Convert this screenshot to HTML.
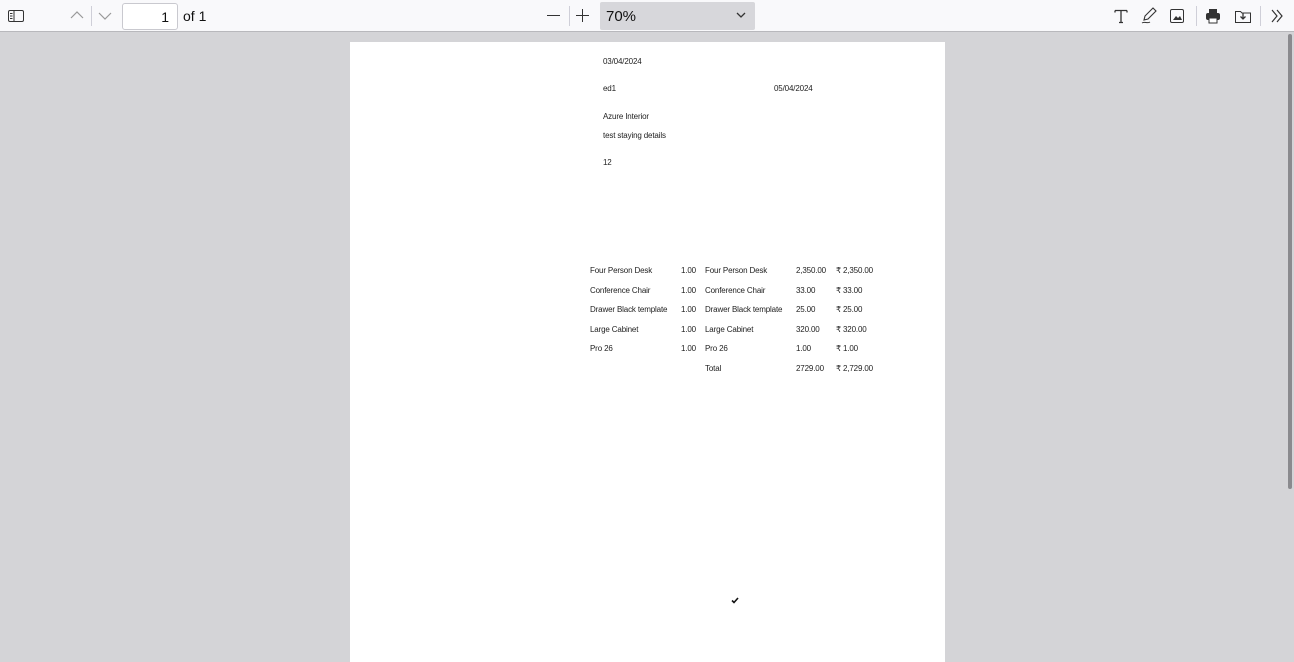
<!DOCTYPE html>
<html><head><meta charset="utf-8"><style>
*{margin:0;padding:0;box-sizing:border-box}
body{width:1294px;height:656px;overflow:hidden;background:#d4d4d7;font-family:"Liberation Sans",sans-serif;position:relative}
.tb{position:absolute;left:0;top:0;width:1294px;height:32px;background:#f9f9fb;border-bottom:1px solid #b8b8bc}
.a{position:absolute}
.sep{position:absolute;top:6px;width:1px;height:20px;background:#cfcfd8}
.page{position:absolute;left:350px;top:42px;width:595px;height:620px;background:#fff}
.t{position:absolute;font-size:8px;color:#222;white-space:nowrap;letter-spacing:-0.15px;margin-top:1px}
svg{position:absolute}
</style></head><body>
<div class="tb">
<svg style="left:8px;top:9px" width="16" height="14" viewBox="0 0 16 14"><rect x="0.5" y="1.5" width="15" height="11" rx="1.5" fill="none" stroke="#333"/><line x1="6" y1="2" x2="6" y2="12" stroke="#333"/><path d="M2 4.5h2.5M2 7h2.5M2 9.5h2.5" stroke="#333"/></svg>
<svg style="left:70px;top:10px" width="14" height="10"><path d="M1 8l6-6 6 6" fill="none" stroke="#999" stroke-width="1.2"/></svg>
<div class="sep" style="left:91px;top:6px"></div>
<svg style="left:98px;top:11px" width="14" height="10"><path d="M1 2l6 6 6-6" fill="none" stroke="#999" stroke-width="1.2"/></svg>
<div class="a" style="left:122px;top:3px;width:56px;height:27px;border:1px solid #c9c9cf;border-radius:3px;background:#fff;font-size:14px;text-align:right;padding:5px 8px 0 0;color:#111">1</div>
<div class="a" style="left:183px;top:8px;font-size:14px;color:#111">of 1</div>
<div class="a" style="left:547px;top:15px;width:13px;height:1.3px;background:#333"></div>
<div class="sep" style="left:569px"></div>
<div class="a" style="left:576px;top:15px;width:13px;height:1.3px;background:#333"></div>
<div class="a" style="left:582px;top:9px;width:1.3px;height:13px;background:#333"></div>
<div class="a" style="left:600px;top:2px;width:155px;height:28px;background:#d7d7db;border-radius:2px;font-size:15px;color:#111;padding:6px 0 0 6px">70%</div>
<svg style="left:736px;top:12px" width="10" height="7"><path d="M1 1l4 4 4-4" fill="none" stroke="#333" stroke-width="1.3"/></svg>
<svg style="left:1113px;top:8px" width="16" height="16"><path d="M2 2.5h12M8 2.5v12M2 2.5v2M14 2.5v2M6 14.5h4" fill="none" stroke="#333" stroke-width="1.3"/></svg>
<svg style="left:1141px;top:7px" width="16" height="18"><path d="M3 13l1-4 8-8 3 3-8 8z" fill="none" stroke="#333" stroke-width="1.1"/><path d="M1 16c3-2 5 1 8-1" fill="none" stroke="#333"/></svg>
<svg style="left:1169px;top:8px" width="16" height="16"><rect x="1.5" y="1.5" width="13" height="13" rx="1.5" fill="none" stroke="#333"/><path d="M4 12l3-4 2 2 2-2 2 4z" fill="#333"/></svg>
<div class="sep" style="left:1196px"></div>
<svg style="left:1205px;top:8px" width="16" height="16"><rect x="4" y="1" width="8" height="4" fill="#333"/><rect x="1" y="5" width="14" height="7" rx="2" fill="#333"/><rect x="4" y="10" width="8" height="5" fill="#fff" stroke="#333"/></svg>
<svg style="left:1234px;top:8px" width="18" height="16"><path d="M1.5 3.5h5l1.5 1.5h8.5v9.5h-15z" fill="none" stroke="#333"/><path d="M9 5v6M6.5 8.5L9 11l2.5-2.5" fill="none" stroke="#333" stroke-width="1.3"/></svg>
<div class="sep" style="left:1260px"></div>
<svg style="left:1270px;top:9px" width="14" height="14"><path d="M2 1l5 6-5 6M7 1l5 6-5 6" fill="none" stroke="#333" stroke-width="1.2"/></svg>
</div>
<div class="a" style="left:1288px;top:34px;width:4px;height:455px;background:#8a8a8e;border-radius:2px"></div>
<div class="page">
<div class="t" style="left:253px;top:14px">03/04/2024</div>
<div class="t" style="left:253px;top:41px">ed1</div>
<div class="t" style="left:424px;top:41px">05/04/2024</div>
<div class="t" style="left:253px;top:69px">Azure Interior</div>
<div class="t" style="left:253px;top:88px">test staying details</div>
<div class="t" style="left:253px;top:115px">12</div>
<div class="t" style="left:240px;top:223px">Four Person Desk</div><div class="t" style="left:331px;top:223px">1.00</div><div class="t" style="left:355px;top:223px">Four Person Desk</div><div class="t" style="left:446px;top:223px">2,350.00</div><div class="t" style="left:486px;top:223px">₹ 2,350.00</div>
<div class="t" style="left:240px;top:243px">Conference Chair</div><div class="t" style="left:331px;top:243px">1.00</div><div class="t" style="left:355px;top:243px">Conference Chair</div><div class="t" style="left:446px;top:243px">33.00</div><div class="t" style="left:486px;top:243px">₹ 33.00</div>
<div class="t" style="left:240px;top:262px">Drawer Black template</div><div class="t" style="left:331px;top:262px">1.00</div><div class="t" style="left:355px;top:262px">Drawer Black template</div><div class="t" style="left:446px;top:262px">25.00</div><div class="t" style="left:486px;top:262px">₹ 25.00</div>
<div class="t" style="left:240px;top:282px">Large Cabinet</div><div class="t" style="left:331px;top:282px">1.00</div><div class="t" style="left:355px;top:282px">Large Cabinet</div><div class="t" style="left:446px;top:282px">320.00</div><div class="t" style="left:486px;top:282px">₹ 320.00</div>
<div class="t" style="left:240px;top:301px">Pro 26</div><div class="t" style="left:331px;top:301px">1.00</div><div class="t" style="left:355px;top:301px">Pro 26</div><div class="t" style="left:446px;top:301px">1.00</div><div class="t" style="left:486px;top:301px">₹ 1.00</div>
<div class="t" style="left:355px;top:321px">Total</div><div class="t" style="left:446px;top:321px">2729.00</div><div class="t" style="left:486px;top:321px">₹ 2,729.00</div>
<svg style="left:381px;top:555px" width="8" height="7"><path d="M1 3.5l2 2 4-4.5" fill="none" stroke="#111" stroke-width="1.6"/></svg>
</div>
</body></html>
